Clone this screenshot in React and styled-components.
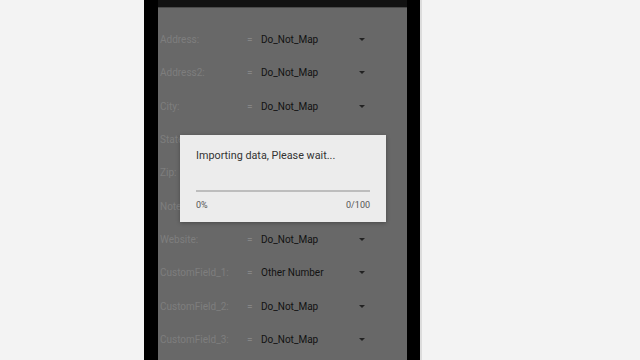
import styled, { createGlobalStyle } from 'styled-components';

const GlobalStyle = createGlobalStyle`
  html, body {
    margin: 0;
    padding: 0;
    background: #f3f3f3;
    font-family: Roboto, 'Liberation Sans', sans-serif;
  }
`

const Page = styled.div`
  width: 640px;
  height: 360px;
  overflow: hidden;
  display: flex;
  padding-left: 144px;
  box-sizing: border-box;
`
const Phone = styled.div`
  width: 249px;
  height: 360px;
  background: #000;
  border-right: 2px solid #dcdcdc;
  padding: 0 13px 0 14px;
  display: flex;
`
const Screen = styled.div`
  position: relative;
  flex: 1;
  background: #686868;
  display: flex;
  flex-direction: column;
`
const TopBar = styled.div`
  height: 7px;
  background: #121212;
  border-bottom: 1px solid #4a4a4a;
`
const List = styled.div`
  padding-top: 15px;
  display: flex;
  flex-direction: column;
`
const Row = styled.div`
  height: 33.33px;
  display: flex;
  align-items: center;
  font-size: 10px;
`
const Label = styled.span`
  width: 87px;
  padding-left: 2px;
  color: #7e7e7e;
`
const Equals = styled.span`
  width: 14px;
  color: #858585;
`
const Value = styled.span`
  width: 98px;
  color: #121212;
`
const Arrow = styled.span`
  width: 0;
  height: 0;
  border-left: 3px solid transparent;
  border-right: 3px solid transparent;
  border-top: 3px solid #222;
`
const Dialog = styled.div`
  position: absolute;
  left: 22px;
  top: 135px;
  width: 206px;
  height: 87px;
  box-sizing: border-box;
  background: #ececec;
  box-shadow: 0 1px 4px rgba(0, 0, 0, 0.3);
  padding: 14px 16px 0 16px;
  display: flex;
  flex-direction: column;
`
const Title = styled.div`
  font-size: 10.8px;
  color: #333;
  line-height: 13px;
`
const Bar = styled.div`
  margin-top: 28px;
  height: 2px;
  background: #bdbdbd;
`
const Counts = styled.div`
  margin-top: 8px;
  display: flex;
  justify-content: space-between;
  font-size: 9px;
  color: #555;
`

const rows = [
  ['Address:', 'Do_Not_Map'],
  ['Address2:', 'Do_Not_Map'],
  ['City:', 'Do_Not_Map'],
  ['State:', 'Do_Not_Map'],
  ['Zip:', 'Do_Not_Map'],
  ['Notes:', 'Do_Not_Map'],
  ['Website:', 'Do_Not_Map'],
  ['CustomField_1:', 'Other Number'],
  ['CustomField_2:', 'Do_Not_Map'],
  ['CustomField_3:', 'Do_Not_Map'],
]

const App = () => {
  return (
    <>
      <GlobalStyle />
      <Page>
        <Phone>
          <Screen>
            <TopBar />
            <List>
              {rows.map(([label, value]) => (
                <Row key={label}>
                  <Label>{label}</Label>
                  <Equals>=</Equals>
                  <Value>{value}</Value>
                  <Arrow />
                </Row>
              ))}
            </List>
            <Dialog>
              <Title>Importing data, Please wait...</Title>
              <Bar />
              <Counts>
                <span>0%</span>
                <span>0/100</span>
              </Counts>
            </Dialog>
          </Screen>
        </Phone>
      </Page>
    </>
  )
}

export default App
